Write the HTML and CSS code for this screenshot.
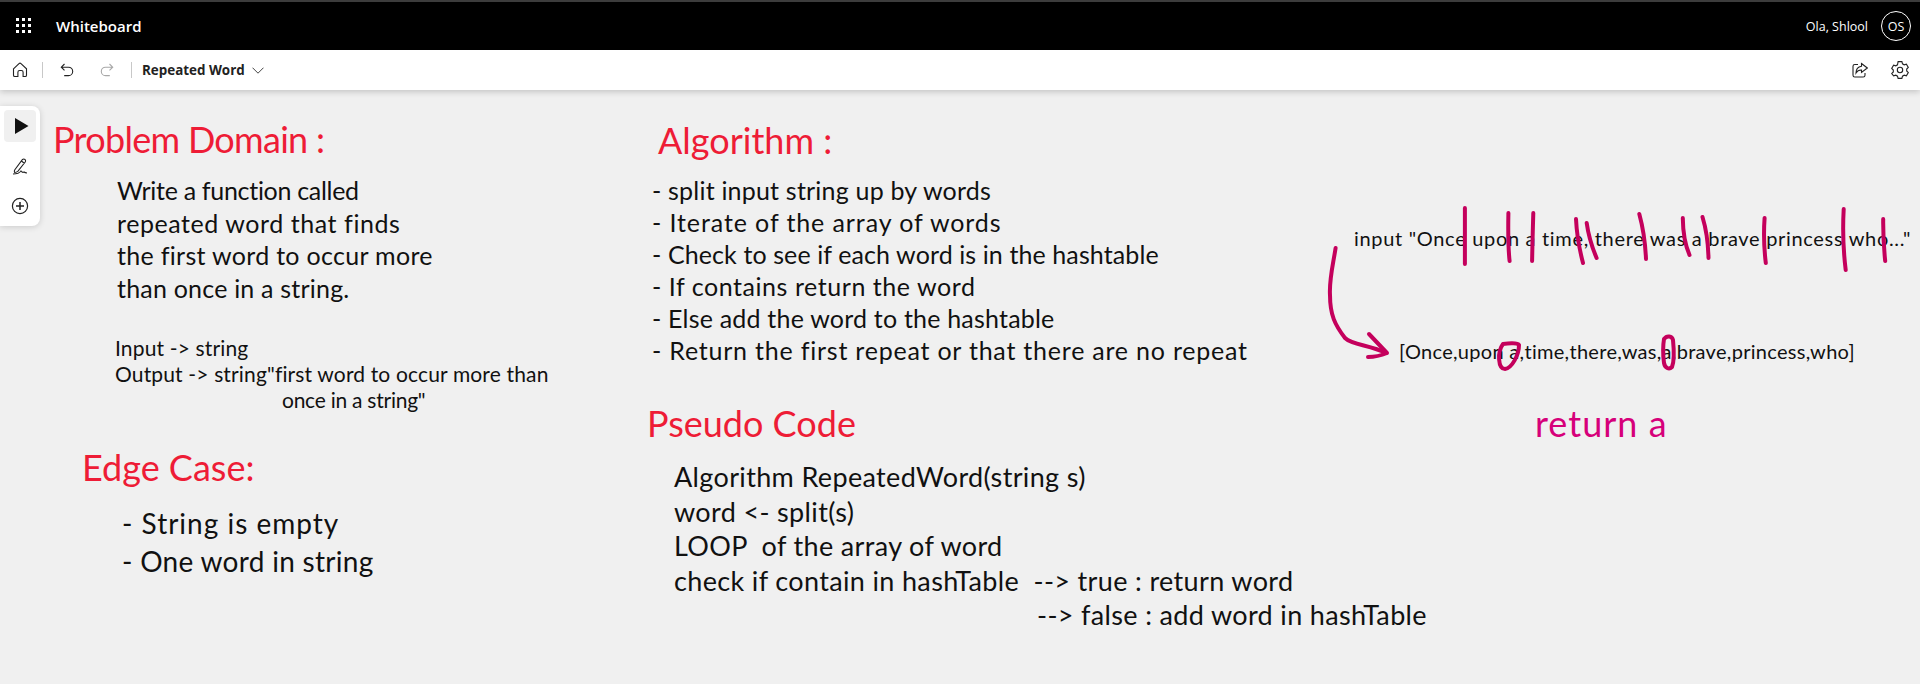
FILE: index.html
```html
<!DOCTYPE html>
<html lang="en">
<head>
<meta charset="utf-8">
<title>Whiteboard</title>
<link rel="stylesheet" href="styles.css">
</head>
<body>
<div class="app">
  <header class="topbar">
    <svg class="waffle" width="16" height="16" viewBox="0 0 16 16"><g fill="#fff"><rect x="0" y="0" width="3" height="3"/><rect x="6" y="0" width="3" height="3"/><rect x="12" y="0" width="3" height="3"/><rect x="0" y="6" width="3" height="3"/><rect x="6" y="6" width="3" height="3"/><rect x="12" y="6" width="3" height="3"/><rect x="0" y="12" width="3" height="3"/><rect x="6" y="12" width="3" height="3"/><rect x="12" y="12" width="3" height="3"/></g></svg>
    <span class="app-name">Whiteboard</span>
    <span class="user-name">Ola, Shlool</span>
    <span class="avatar">OS</span>
  </header>
  <nav class="toolbar">
    <svg class="icon home" width="16" height="16" viewBox="0 0 16 16" fill="none" stroke="#222" stroke-width="1.1"><path d="M1.5 6.8 7 1.6q1-.9 2 0l5.5 5.2v6.4q0 1.3-1.3 1.3h-2.1V10.300q0-1.800-1.700-1.800H7.600q-1.700 0-1.700 1.800v4.200H2.800q-1.300 0-1.300-1.300Z"/></svg>
    <span class="sep"></span>
    <svg class="icon undo" width="14" height="14" viewBox="0 0 14 14" fill="none" stroke="#222" stroke-width="1.1"><path d="M4.500 1 1.300 4.200l3.200 3.200M1.300 4.200h7.200a4.200 4.200 0 0 1 0 8.400H4.200"/></svg>
    <svg class="icon redo" width="14" height="14" viewBox="0 0 14 14" fill="none" stroke="#a8a8a8" stroke-width="1.1"><path d="M9.500 1l3.200 3.200-3.200 3.200M12.700 4.200H5.500a4.200 4.200 0 0 0 0 8.400h4.300"/></svg>
    <span class="sep sep-title"></span>
    <span class="doc-title">Repeated Word</span>
    <svg class="icon chevron" width="12" height="7" viewBox="0 0 12 7" fill="none" stroke="#444" stroke-width="1"><path d="M.5.700 6 6.200 11.500.7"/></svg>
    <svg class="icon share" width="16" height="16" viewBox="0 0 16 16" fill="none" stroke="#222" stroke-width="1.100"><path d="M6 2.500H2.800Q1 2.500 1 4.300v8.900q0 1.800 1.800 1.800h8.400q1.800 0 1.800-1.800v-2.200"/><path d="M9.500 1.500 15.300 6l-5.800 4.500V8q-3.700-.2-5.500 3 0-6 5.500-6.800Z"/></svg>
    <svg class="icon gear" width="18" height="18" viewBox="0 0 18 18" fill="none" stroke="#222" stroke-width="1.100"><path d="M7.100 1.200h3.800l.6 2.200 1.700 1 2.200-.6 1.900 3.300-1.600 1.600v1.800l1.600 1.600-1.900 3.300-2.200-.6-1.700 1-.6 2.200H7.100l-.6-2.200-1.700-1-2.200.6L.7 13.100l1.600-1.600V9.700L.7 8.100l1.900-3.300 2.200.6 1.700-1Z" transform="translate(0 -.6)"/><circle cx="9" cy="9" r="2.700"/></svg>
  </nav>
  <main class="canvas">
    <aside class="tools">
      <span class="tool tool-active"><svg width="14" height="16" viewBox="0 0 14 16"><path d="M0 0 13.500 8 0 16Z" fill="#111"/></svg></span>
      <span class="tool"><svg width="16" height="17" viewBox="0 0 16 17" fill="none" stroke="#222" stroke-width="1.100"><path d="M3 11.500 10.500 1.500q1.300-1 2.500 0 1 1.200.2 2.500L6 13.200q-1.500 1.300-3.300 1.300-.8-1.500.3-3ZM9.500 3l3 2.500"/><path d="M1 16q3-.2 5-.8 2-.8 3-2.200 1.500 2 3 1 1 .9 3 1"/></svg></span>
      <span class="tool"><svg width="18" height="18" viewBox="0 0 18 18" fill="none" stroke="#222" stroke-width="1.200"><circle cx="9" cy="9" r="7.600"/><path d="M9 5v8M5 9h8" stroke-width="1.500"/></svg></span>
    </aside>

    <section class="note title" id="problem-title">Problem Domain :</section>
    <section class="note body-problem">
      <div>Write a function called</div>
      <div>repeated word that finds</div>
      <div>the first word to occur more</div>
      <div>than once in a string.</div>
    </section>
    <section class="note body-io">
      <div>Input -&gt; string</div>
      <div>Output -&gt; string"first word to occur more than</div>
      <div class="indent-once">once in a string"</div>
    </section>
    <section class="note title" id="edge-title">Edge Case:</section>
    <section class="note body-edge">
      <div>- String is empty</div>
      <div>- One word in string</div>
    </section>

    <section class="note title" id="algo-title">Algorithm :</section>
    <section class="note body-algo">
      <div>- split input string up by words</div>
      <div>- Iterate of the array of words</div>
      <div>- Check to see if each word is in the hashtable</div>
      <div>- If contains return the word</div>
      <div>- Else add the word to the hashtable</div>
      <div>- Return the first repeat or that there are no repeat</div>
    </section>
    <section class="note title" id="pseudo-title">Pseudo Code</section>
    <section class="note body-pseudo">
      <div>Algorithm RepeatedWord(string s)</div>
      <div>word &lt;- split(s)</div>
      <div>LOOP  of the array of word</div>
      <div>check if contain in hashTable  --&gt; true : return word</div>
      <div class="indent-false">--&gt; false : add word in hashTable</div>
    </section>

    <section class="note sample" id="sample-input">input "Once upon a time, there was a brave princess who..."</section>
    <section class="note sample" id="sample-array">[Once,upon a,time,there,was,a,brave,princess,who]</section>
    <section class="note" id="return-a">return a</section>

    <svg class="ink" viewBox="0 90 1920 594" fill="none" stroke="#c4005c" stroke-width="4" stroke-linecap="round" stroke-linejoin="round">
      <path d="M1464.900 208V264"/>
      <path d="M1508.400 213Q1507.800 245 1509.600 261"/>
      <path d="M1533.300 213Q1532.500 240 1532.100 261"/>
      <path d="M1576 219Q1577 240 1583 263"/>
      <path d="M1586.700 223Q1589 240 1596.600 258"/>
      <path d="M1639.300 214Q1645 235 1646 259"/>
      <path d="M1682.800 218Q1683 240 1689.500 255"/>
      <path d="M1702.500 217Q1708 235 1708.500 258"/>
      <path d="M1764.600 218Q1763 240 1765.800 263"/>
      <path d="M1843.700 209Q1842 240 1845.700 270"/>
      <path d="M1883.200 219Q1883 240 1885.200 261"/>
      <path d="M1335.600 248C1333 265 1329 280 1330 295C1330 315 1335 325 1345 338C1352 345 1370 345 1386 353"/>
      <path d="M1369 334 1387 353C1380 356 1374 357 1368 357"/>
      <path d="M1503 344C1510 343 1518 343 1519 345C1519 355 1512 368 1505 369C1498 369 1497 352 1503 344Z"/>
      <path d="M1664 339C1667 335 1672 336 1673 340C1674 350 1674 362 1672 367C1669 370 1665 368 1664 363C1663 355 1663 345 1664 339Z"/>
    </svg>
  </main>
</div>
</body>
</html>
```
FILE: styles.css
```css
* { box-sizing: border-box; }
html, body { margin: 0; height: 100%; }
body { overflow: hidden; font-family: "Open Sans", "Noto Sans", sans-serif; }

.app { display: flex; flex-direction: column; height: 684px; }

.topbar {
  display: flex; align-items: center; height: 50px; flex: none;
  background: #000; border-top: 2px solid #3c3c3c; color: #fff;
  padding: 0 9px 0 16px;
}
.waffle { margin-right: 24px; }
.app-name { font-size: 15px; font-weight: 600; }
.user-name { margin-left: auto; font-size: 12.500px; margin-right: 13px; }
.avatar {
  width: 30px; height: 30px; border: 1px solid #fff; border-radius: 50%;
  display: flex; align-items: center; justify-content: center; font-size: 12.500px;
}

.toolbar {
  display: flex; align-items: center; height: 40px; flex: none;
  background: #fff; padding: 0 11px 0 12px; position: relative; z-index: 2;
  box-shadow: 0 2px 6px rgba(0,0,0,.18);
}
.sep { width: 1px; height: 16px; background: #c8c8c8; margin: 0 17px 0 14px; }
.sep-title { margin: 0 10px 0 17px; }
.redo { margin-left: 26px; }
.doc-title { font-size: 13.400px; font-weight: 700; color: #222; }
.chevron { margin-left: 7px; }
.share { margin-left: auto; margin-right: 23px; }

.canvas { position: relative; flex: 1; background: #f0f0f0; overflow: hidden; }

.tools {
  position: absolute; left: 0; top: 16px; width: 40px; height: 120px; padding: 4px;
  display: flex; flex-direction: column; gap: 8px;
  background: #fff; border-radius: 0 8px 8px 0; box-shadow: 0 1px 6px rgba(0,0,0,.16);
}
.tool { height: 32px; display: flex; align-items: center; justify-content: center; flex: none; }
.tool-active { background: #f0f0f0; border-radius: 4px; padding-left: 3px; }

.note { position: absolute; white-space: nowrap; font-family: Lato, "Liberation Sans", sans-serif; color: #111; }
.note > div { white-space: pre; }
.title { font-size: 36px; line-height: 44px; color: #ee1c36; }
#problem-title { left: 53px; top: 27px; letter-spacing: -.7px; }
#edge-title { left: 82px; top: 355px; }
#algo-title { left: 658px; top: 28px; }
#pseudo-title { left: 647px; top: 311px; }

.body-problem { left: 117px; top: 84px; font-size: 25px; line-height: 32.500px; }
.body-problem > div:nth-child(1) { letter-spacing: -.3px; }
.body-problem > div:nth-child(2) { letter-spacing: .56px; }
.body-problem > div:nth-child(3) { letter-spacing: .3px; }
.body-problem > div:nth-child(4) { letter-spacing: .2px; }

.body-io { left: 115px; top: 245px; font-size: 21px; line-height: 26px; letter-spacing: .15px; }
.indent-once { padding-left: 167px; letter-spacing: -.25px; }

.body-edge { left: 122px; top: 414px; font-size: 28px; line-height: 38px; }
.body-edge > div:nth-child(1) { letter-spacing: 1px; }
.body-edge > div:nth-child(2) { letter-spacing: .3px; }

.body-algo { left: 652px; top: 84px; font-size: 25px; line-height: 32px; letter-spacing: .2px; }
.body-algo > div:nth-child(2) { letter-spacing: .9px; }
.body-algo > div:nth-child(3) { letter-spacing: .1px; }
.body-algo > div:nth-child(4) { letter-spacing: .55px; }
.body-algo > div:nth-child(6) { letter-spacing: .78px; }

.body-pseudo { left: 674px; top: 370px; font-size: 27px; line-height: 34.500px; letter-spacing: .35px; }
.indent-false { padding-left: 363px; }

.sample { font-size: 20px; line-height: 24px; }
#sample-input { left: 1354px; top: 136px; letter-spacing: .68px; }
#sample-array { left: 1399px; top: 249px; letter-spacing: .3px; }
#return-a { left: 1535px; top: 311px; font-size: 36px; line-height: 44px; letter-spacing: 1px; color: #d6007a; }

.ink { position: absolute; left: 0; top: 0; width: 1920px; height: 594px; pointer-events: none; }
```
